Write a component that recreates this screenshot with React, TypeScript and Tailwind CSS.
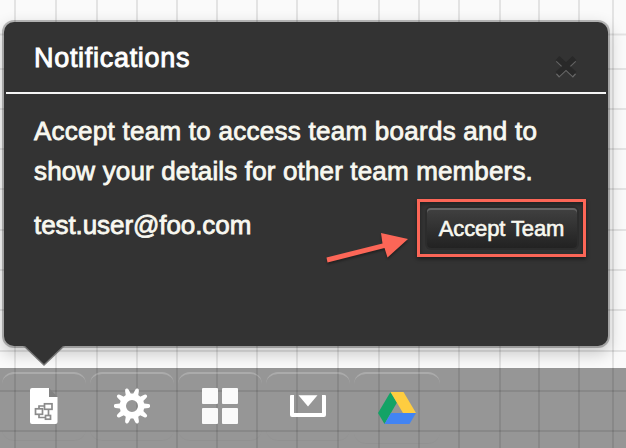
import React from "react";

const columns = [15, 56, 97, 137, 177, 217, 257, 297, 338, 379, 419, 459, 500, 539, 579, 613];
const rows = [34.5, 69, 109, 149, 189, 230, 270, 310, 351, 391, 431];

function BoardGrid() {
  return (
    <svg className="absolute inset-0" width="626" height="448" stroke="#000" strokeOpacity="0.09" strokeWidth="2">
      {columns.map((x) => <path key={x} d={`M${x} 0V448`} />)}
      {rows.map((y) => <path key={y} d={`M0 ${y}H626`} />)}
    </svg>
  );
}

function CloseIcon() {
  return (
    <svg width="24" height="26" viewBox="0 0 24 26" fill="none">
      <path d="M3.500 6L20.500 22M20.500 6L3.500 22" stroke="#666" strokeWidth="4.500" />
      <path d="M3.500 4L20.500 20M20.500 4L3.500 20" stroke="#292929" strokeWidth="5.500" />
    </svg>
  );
}

function DocumentIcon() {
  return (
    <svg width="28" height="36" viewBox="0 0 28 36">
      <path d="M2 0H19V9H27.500V34Q27.500 36 25.500 36H2Q0 36 0 34V2Q0 0 2 0Z" fill="#fff" />
      <path d="M19 0L27.500 9H19Z" fill="#828282" />
      <g fill="none" stroke="#8b8b8b" strokeWidth="1.7">
        <path d="M9 20V18H14M9 27V29.500H15M18.500 22V27" />
        <rect x="14.500" y="15.800" width="7.500" height="5.500" />
        <rect x="5.500" y="20.800" width="7" height="5.500" />
        <rect x="15.500" y="27.500" width="5" height="3.700" />
      </g>
    </svg>
  );
}

function GearIcon() {
  return (
    <svg width="36" height="36" viewBox="-18 -18 36 36" fill="#fff">
      {[0, 36, 72, 108, 144, 180, 216, 252, 288, 324].map((a) => (
        <path key={a} transform={`rotate(${a})`} d="M9 -4.500L12 -2.600L16.500 -1.900Q18.300 -1.500 18.300 0Q18.300 1.500 16.500 1.900L12 2.600L9 4.500Z" />
      ))}
      <circle r="9.200" fill="none" stroke="#fff" strokeWidth="6.400" />
    </svg>
  );
}

function TilesIcon() {
  return (
    <div className="grid size-9 grid-cols-2 gap-1">
      {[0, 1, 2, 3].map((i) => <span key={i} className="rounded-[1px] bg-[#fafafa]" />)}
    </div>
  );
}

function InboxIcon() {
  return (
    <svg width="36" height="22" viewBox="0 0 36 22">
      <path d="M1 0H4V18H32V0H35Q36 0 36 1V20Q36 22 34 22H2Q0 22 0 20V1Q0 0 1 0Z" fill="#fff" />
      <path d="M8.500 .3H27.500L18 11.500Z" fill="#fff" />
    </svg>
  );
}

function DriveIcon() {
  return (
    <svg width="38" height="32" viewBox="0 0 38 32">
      <path d="M12.500 0L0 21L6.500 32L19 10.500Z" fill="#13a366" />
      <path d="M12.500 0H25.500L38 21H25Z" fill="#fecd40" />
      <path d="M13 21H38L31.500 32H6.500Z" fill="#4284f3" />
    </svg>
  );
}

const tools = [
  { label: "Document", icon: <DocumentIcon />, style: "w-[84px] h-[69px] pb-0.5" },
  { label: "Settings", icon: <GearIcon />, style: "w-[84px] h-[69px] pb-0.5" },
  { label: "Tiles", icon: <TilesIcon />, style: "w-[84px] h-[69px] pb-0.5" },
  { label: "Inbox", icon: <InboxIcon />, style: "w-[84px] h-[69px] pb-0.5" },
  { label: "Drive", icon: <DriveIcon />, style: "w-[86px] h-[72px] pb-0.5" },
];

export default function App() {
  return (
    <div className="relative h-[448px] w-[626px] overflow-hidden bg-[#fafafa] font-['Liberation_Sans',Arial,sans-serif]">
      <BoardGrid />
      <div className="relative flex h-full flex-col pt-[22px]">
        <section className="relative z-10 ml-1 h-[324px] w-[604px] rounded-[10px] bg-[#333] shadow-[0_0_0_2px_rgba(0,0,0,0.25),0_6px_16px_2px_rgba(0,0,0,0.2)]">
          <header className="mx-0.5 flex h-[72px] items-start justify-between border-b-2 border-[#f5f5f5] pr-7 pl-7">
            <h1 className="pt-[18px] text-[27px] leading-9 tracking-[0.7px] whitespace-nowrap text-white [-webkit-text-stroke:0.9px_white]">Notifications</h1>
            <button aria-label="Close" className="mt-8"><CloseIcon /></button>
          </header>
          <div className="px-[30px] pt-[17px] text-[26px] leading-10 text-[#f8f8f0] [-webkit-text-stroke:0.8px_#f8f8f0]">
            <p className="tracking-[0.26px] whitespace-nowrap">Accept team to access team boards and to</p>
            <p className="tracking-[0.15px] whitespace-nowrap">show your details for other team members.</p>
          </div>
          <div className="flex items-start justify-between pr-[22px] pl-[30px] text-[#f8f8f0] [-webkit-text-stroke:0.8px_#f8f8f0]">
            <span className="pt-[14px] text-[26px] leading-10 tracking-[-0.08px]">test.user@foo.com</span>
            <div className="mt-2 flex h-[58px] w-[169px] items-center justify-center border-3 border-[#fc6657] shadow-[0_2px_4px_rgba(0,0,0,0.45),inset_0_2px_4px_rgba(0,0,0,0.4)]">
              <button className="h-10 w-[150px] rounded-[4px] bg-linear-to-b from-[#414141] to-[#222] text-[22px] tracking-[-0.12px] whitespace-nowrap shadow-[inset_0_2px_0_#646464,0_0_0_2px_rgba(0,0,0,0.13)] [-webkit-text-stroke:0.6px_#f8f8f0]">Accept Team</button>
            </div>
          </div>
          <svg className="absolute top-[205px] left-[318px] drop-shadow-[0_2px_1px_rgba(0,0,0,0.35)]" width="96" height="64" viewBox="322 227 96 64">
            <path d="M326.500 257.500L382.500 243.500L381 233L408 239L387.500 257.500L384.500 248L327.500 262.500Z" fill="#fc6657" />
          </svg>
          <svg className="absolute top-[323px] left-[18px]" width="44" height="22" viewBox="0 0 44 22">
            <path d="M1 1L22 21L43 1Z" fill="#777" />
            <path d="M2 0L22 19L42 0Z" fill="#333" />
          </svg>
        </section>
        <nav className="mt-[22px] flex flex-1 items-start gap-1 bg-black/40 pt-1 pl-0.5">
          {tools.map((tool) => (
            <button key={tool.label} aria-label={tool.label} className={`${tool.style} flex shrink-0 items-center justify-center rounded-[12px] border-t-2 border-b border-t-white/20 border-b-black/3`}>
              {tool.icon}
            </button>
          ))}
        </nav>
      </div>
    </div>
  );
}
